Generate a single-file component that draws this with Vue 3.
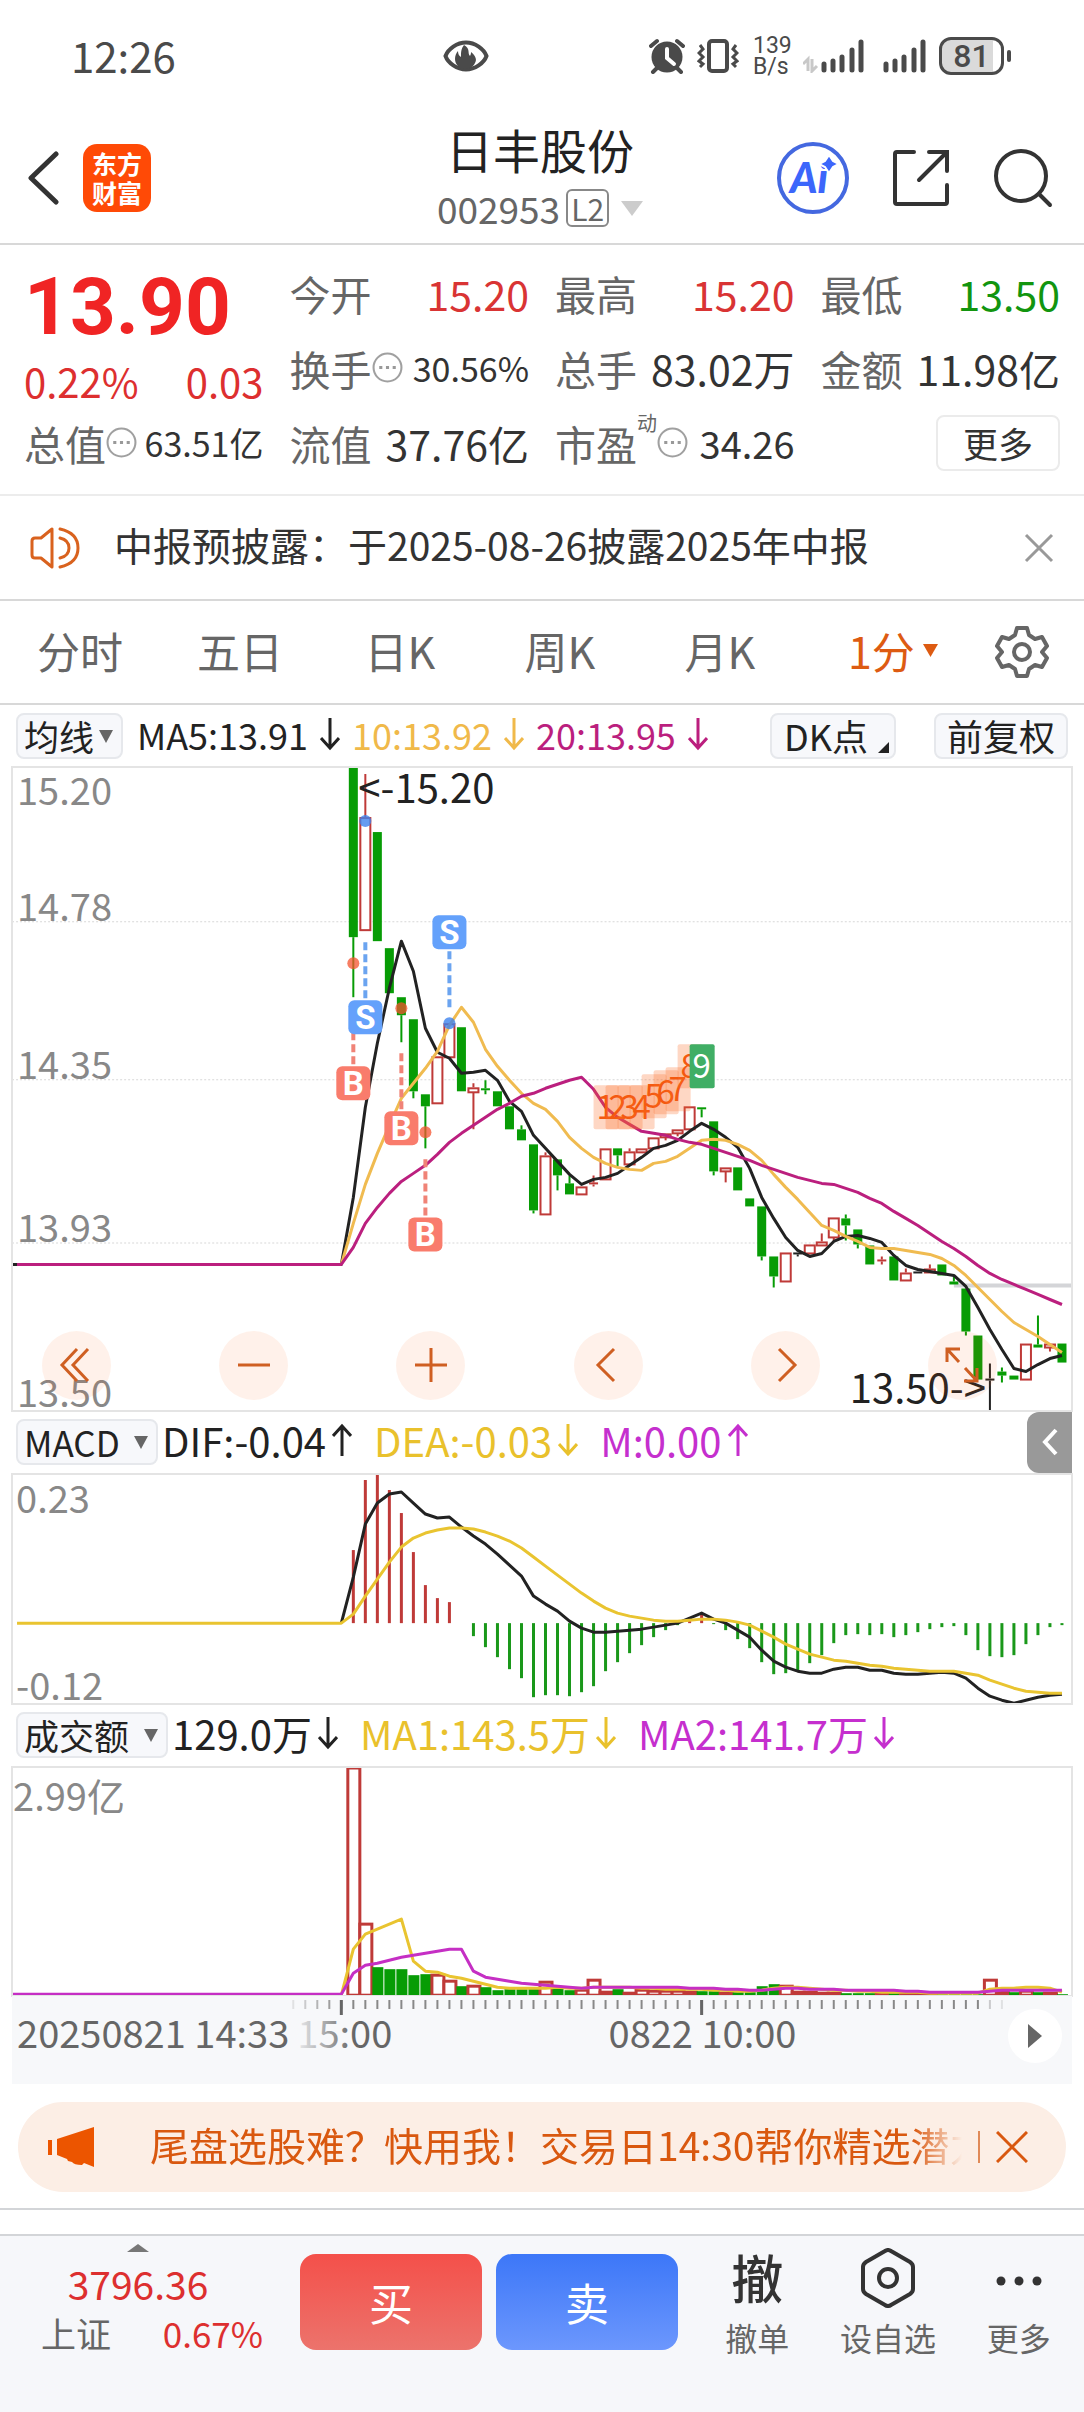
<template>
  <div class="page">
    <div class="status-bar">
      <span class="clock">12:26</span>
      <svg class="eye" viewBox="0 0 46 32">
        <path d="M2.500 16C5 9 14 2.500 23 2.500S41 9 43.500 16C41 23 32 29.500 23 29.500S5 23 2.500 16Z" fill="none" stroke="#4a4a4a" stroke-width="4" />
        <path d="M21 5c7 4 3 8 6 11 1-2 1-3 1-4 5 4 6 8 4 11-2 4-6 6-10 6-6 0-10-5-10-10 0-3 1-6 3-8 0 3 1 5 3 6 0-5 0-8 3-12Z" fill="#4a4a4a" />
      </svg>
      <div class="status-right">
        <svg class="alarm" viewBox="0 0 36 36">
          <circle cx="18" cy="19" r="15.500" fill="#4a4a4a" />
          <path d="M2 8l6-5M34 8l-6-5M8 30l-4 4M28 30l4 4" stroke="#4a4a4a" stroke-width="4" stroke-linecap="round" />
          <path d="M18 11v9l7 6" fill="none" stroke="#fff" stroke-width="4" stroke-linecap="round" />
        </svg>
        <svg class="vibrate" viewBox="0 0 42 34">
          <rect x="12" y="2" width="18" height="30" rx="3" fill="none" stroke="#4a4a4a" stroke-width="4" />
          <path d="M3 6l3 4-4 4 4 4-4 4 4 3-3 3M39 6l-3 4 4 4-4 4 4 4-4 3 3 3" fill="none" stroke="#4a4a4a" stroke-width="3" />
        </svg>
        <span class="speed"><span>139</span><span>B/s</span></span>
        <svg class="signal-data" viewBox="0 0 62 34">
          <path d="M0 25l5-5v12M14 27l-5 5V20" fill="none" stroke="#c8c8c8" stroke-width="3" />
          <path d="M21 25v6M30 22v9M39 18v13M49 11v20M58 3v28" stroke="#4a4a4a" stroke-width="5" stroke-linecap="round" />
        </svg>
        <svg class="signal" viewBox="0 0 44 34">
          <path d="M3 25v6M12 22v9M21 18v13M31 11v20M40 3v28" stroke="#4a4a4a" stroke-width="5" stroke-linecap="round" />
        </svg>
        <span class="battery">81</span>
      </div>
    </div>

    <header class="header">
      <div class="header-left">
        <button class="icon-btn" aria-label="返回">
          <svg width="32" height="54" viewBox="0 0 32 54"><path d="M29 3L4 27l25 24" fill="none" stroke="#333" stroke-width="5" stroke-linecap="round" stroke-linejoin="round" /></svg>
        </button>
        <span class="logo"><span>东方</span><span>财富</span></span>
      </div>
      <div class="header-title">
        <h1>日丰股份</h1>
        <button class="code">002953<span class="level">L2</span>
          <svg width="22" height="16" viewBox="0 0 22 16"><path d="M0 1h22L11 16Z" fill="#ccc" /></svg>
        </button>
      </div>
      <div class="header-right">
        <button class="icon-btn" aria-label="智能助手">
          <svg width="72" height="72" viewBox="0 0 72 72">
            <circle cx="36" cy="36" r="34" fill="none" stroke="#4468e0" stroke-width="4" />
            <text class="ai" x="13" y="51">Ai</text>
            <path d="M52 13l4 6 6 3-6 3-4 6-4-6-6-3 6-3Z" fill="#3c66fb" stroke="#fff" stroke-width="2" />
          </svg>
        </button>
        <button class="icon-btn" aria-label="分享">
          <svg width="58" height="58" viewBox="0 0 58 58">
            <path d="M22 3H5q-2 0-2 2v48q0 2 2 2h48q2 0 2-2V36M37 3h18v19M55 3L27 31" fill="none" stroke="#333" stroke-width="4" stroke-linecap="round" />
          </svg>
        </button>
        <button class="icon-btn" aria-label="搜索">
          <svg width="60" height="60" viewBox="0 0 60 60">
            <circle cx="28" cy="28" r="25" fill="none" stroke="#333" stroke-width="4" />
            <path d="M46 46l11 11" stroke="#333" stroke-width="4" stroke-linecap="round" />
          </svg>
        </button>
      </div>
    </header>

    <section class="quote">
      <div class="quote-main">
        <div class="price">13.90</div>
        <div class="change"><span>0.22%</span><span>0.03</span></div>
      </div>
      <div v-for="item in stats" :key="item.label" :class="['stat', item.color]">
        <span class="label">{{ item.label }}</span>
        <sup v-if="item.sup">{{ item.sup }}</sup>
        <svg v-if="item.tip" class="tip" viewBox="0 0 30 30">
          <circle cx="15" cy="15" r="13.500" fill="none" stroke="#a0a0a0" stroke-width="2" />
          <path d="M7 13.500h3v3H7zM13.500 13.500h3v3h-3zM20 13.500h3v3h-3z" fill="#999" />
        </svg>
        <span :class="['value', item.size]">{{ item.value }}</span>
      </div>
      <div class="more"><button>更多</button></div>
    </section>

    <section class="notice">
      <svg width="52" height="44" viewBox="0 0 52 44">
        <path d="M22 3v38L11 32H5q-3 0-3-3V15q0-3 3-3h6ZM30 3q18 4 18 19T30 41M30 12q9 2 9 10t-9 10" fill="none" stroke="#d9621e" stroke-width="3" stroke-linejoin="round" stroke-linecap="round" />
      </svg>
      <p>中报预披露：于2025-08-26披露2025年中报</p>
      <button class="icon-btn" aria-label="关闭公告">
        <svg width="30" height="30" viewBox="0 0 30 30"><path d="M2 2l26 26M28 2L2 28" stroke="#999" stroke-width="3" /></svg>
      </button>
    </section>

    <nav class="tabs">
      <button v-for="tab in tabs" :key="tab">{{ tab }}</button>
      <span class="tab-select">
        <select aria-label="分钟周期"><option>1分</option><option>5分</option></select>
        <svg width="15" height="13" viewBox="0 0 15 13"><path d="M0 0h15L7.500 13Z" fill="#dd5b12" /></svg>
      </span>
      <button class="gear" aria-label="设置">
        <svg width="54" height="54" viewBox="0 0 54 54">
          <path d="M22 3h10l2 7 6 4 7-2 5 9-5 6 5 6-5 9-7-2-6 4-2 7H22l-2-7-6-4-7 2-5-9 5-6-5-6 5-9 7 2 6-4Z" fill="none" stroke="#666" stroke-width="4" stroke-linejoin="round" />
          <circle cx="27" cy="27" r="8" fill="none" stroke="#666" stroke-width="4" />
        </svg>
      </button>
    </nav>

    <div class="indicator main-indicator">
      <span class="picker tight">
        <select aria-label="主图指标"><option>均线</option></select>
        <svg width="14" height="13" viewBox="0 0 14 13"><path d="M0 0h14L7 13Z" fill="#666" /></svg>
      </span>
      <span v-for="v in maValues" :key="v.text" :class="['reading', v.color]">
        {{ v.text }}<svg class="arrow" viewBox="0 0 20 34"><path :d="arrows[v.dir]" /></svg>
      </span>
      <button class="chip dk">DK点</button>
      <button class="chip">前复权</button>
    </div>

    <div class="chart price-chart">
      <svg viewBox="0 0 1059 643">
        <path class="grid-line" d="M0 154.500H1059M0 312.500H1059M0 475.500H1059" />
        <path class="prev-close" d="M941 518H1059" />
        <text v-for="t in priceLabels" :key="t.text" class="axis-text" x="5" :y="t.y">{{ t.text }}</text>
        <g v-for="(c, i) in candles" :key="i" :class="c[0]">
          <path class="wick" :d="`M${px(i)} ${c[3] ?? c[1]}V${c[1]}M${px(i)} ${c[2]}V${c[4] ?? c[2]}`" />
          <rect v-if="c[0] === 'up' && c[2] - c[1] > 3" class="hollow" :x="px(i) - 5" :y="c[1] + 1" width="10" :height="c[2] - c[1] - 1" />
          <rect v-else class="solid" :x="px(i) - 4.500" :y="c[1]" width="9" :height="c[2] - c[1]" />
        </g>
        <path class="line dark" d="M0 497H330" />
        <polyline class="line dark" :points="points(ma5)" />
        <polyline class="line amber" :points="points(ma10)" />
        <polyline class="line crimson" :points="'5,497 ' + points(ma20)" />
        <g v-for="(n, i) in countdown" :key="'n' + i">
          <rect :class="i === 8 ? 'count-last' : 'count-box'" :x="px(i + 21) - 12" :y="n - 22" width="25" height="44" rx="2" />
          <text :class="i === 8 ? 'count-last-text' : 'count-text'" :x="px(i + 21)" :y="n + 12">{{ i + 1 }}</text>
        </g>
        <g v-for="m in marks" :key="'m' + m.x" :class="m.side === 'S' ? 'sell-mark' : 'buy-mark'">
          <path :d="`M${m.x} ${m.from}V${m.to}`" />
          <circle :cx="m.x" :cy="m.dot" r="6" />
          <rect :x="m.x - 17" :y="m.y - 17" width="34" height="34" rx="6" />
          <text :x="m.x" :y="m.y + 12">{{ m.side }}</text>
        </g>
        <text class="peak-text" x="346" y="36">&lt;-15.20</text>
        <text class="peak-text" x="973" y="635" text-anchor="end">13.50-&gt;</text>
      </svg>
      <div class="chart-tools">
        <button v-for="tool in tools" :key="tool.name" :aria-label="tool.name">
          <svg width="36" height="36" viewBox="0 0 36 36"><path :d="tool.d" /></svg>
        </button>
      </div>
    </div>

    <div class="indicator">
      <span class="picker">
        <select aria-label="副图指标"><option>MACD</option></select>
        <svg width="14" height="13" viewBox="0 0 14 13"><path d="M0 0h14L7 13Z" fill="#666" /></svg>
      </span>
      <span v-for="v in macdValues" :key="v.text" :class="['reading', v.color]">
        {{ v.text }}<svg class="arrow" viewBox="0 0 20 34"><path :d="arrows[v.dir]" /></svg>
      </span>
      <button class="collapse" aria-label="展开侧栏">
        <svg width="16" height="28" viewBox="0 0 16 28"><path d="M14 2L3 14l11 12" fill="none" stroke="#fff" stroke-width="4" /></svg>
      </button>
    </div>

    <div class="chart">
      <svg viewBox="0 0 1059 230">
        <text class="axis-text" x="4" y="39">0.23</text>
        <text class="axis-text" x="4" y="226">-0.12</text>
        <path v-for="(h, i) in macdBars" :key="i" :class="h < 149 ? 'bar-up' : 'bar-down'" :d="`M${px(i)} 149V${h}`" />
        <polyline class="line dark" :points="points(dif)" />
        <polyline class="line gold" :points="'5,149 ' + points(dea)" />
      </svg>
    </div>

    <div class="indicator">
      <span class="picker">
        <select aria-label="量能指标"><option>成交额</option></select>
        <svg width="14" height="13" viewBox="0 0 14 13"><path d="M0 0h14L7 13Z" fill="#666" /></svg>
      </span>
      <span v-for="v in volumeValues" :key="v.text" :class="['reading', v.color]">
        {{ v.text }}<svg class="arrow" viewBox="0 0 20 34"><path :d="arrows[v.dir]" /></svg>
      </span>
    </div>

    <div class="chart">
      <svg viewBox="0 0 1059 229">
        <text class="axis-text" x="1" y="44">2.99亿</text>
        <g v-for="(v, i) in volumes" :key="i" :class="volumeUp.includes(i) ? 'up' : 'down'">
          <rect v-if="volumeUp.includes(i)" class="hollow thick" :x="px(i) - 5.500" :y="Math.min(v + 1, 226)" width="12" :height="Math.max(227 - v, 2)" />
          <rect v-else class="solid" :x="px(i) - 5" :y="v" width="11" :height="229 - v" />
        </g>
        <polyline class="line gold" :points="points(volMa1)" />
        <polyline class="line magenta" :points="'0,227 ' + points(volMa2)" />
      </svg>
    </div>

    <div class="time-axis">
      <svg viewBox="0 0 1059 88">
        <defs>
          <linearGradient id="fade"><stop offset="0" stop-color="#666" stop-opacity="0.1" /><stop offset="0.6" stop-color="#666" /></linearGradient>
        </defs>
        <path v-for="i in 60" :key="i" class="tick" :opacity="tickOpacity(i)" :d="`M${px(i - 6)} 4V13`" />
        <path class="tick major" :d="`M${px(-1)} 4V19M${px(29)} 4V19`" />
        <text class="time-text" x="5" y="52">20250821 14:33</text>
        <text class="time-text fading" x="285" y="52">15:00</text>
        <text class="time-text" x="596" y="52">0822 10:00</text>
      </svg>
      <button class="play" aria-label="播放">
        <svg width="14" height="24" viewBox="0 0 14 24"><path d="M0 0l14 12L0 24Z" fill="#666" /></svg>
      </button>
    </div>

    <div class="promo">
      <svg width="46" height="40" viewBox="0 0 46 40">
        <path d="M0 13h4v15H0zM9 12L46 0v40l-10-4-2 2q-8 0-10-3l-4-1-1-2-10-4Z" fill="#ec5500" />
      </svg>
      <a href="#">尾盘选股难？快用我！交易日14:30帮你精选潜力</a>
      <button class="icon-btn" aria-label="关闭推广">
        <svg width="32" height="32" viewBox="0 0 32 32"><path d="M1 1l30 30M31 1L1 31" stroke="#d9580f" stroke-width="3" /></svg>
      </button>
    </div>

    <hr class="divider">

    <footer class="bottom-bar">
      <div class="index">
        <svg width="22" height="8" viewBox="0 0 22 8"><path d="M0 8L11 0l11 8Z" fill="#777" /></svg>
        <strong>3796.36</strong>
        <div class="index-row"><span>上证</span><em>0.67%</em></div>
      </div>
      <button class="trade buy">买</button>
      <button class="trade sell">卖</button>
      <div class="actions">
        <button><span class="glyph">撤</span>撤单</button>
        <button>
          <svg class="glyph" width="56" height="60" viewBox="0 0 56 60">
            <path d="M25 3q3-2 6 0l19 11q3 2 3 5v22q0 3-3 5L31 57q-3 2-6 0L6 46q-3-2-3-5V19q0-3 3-5Z" fill="none" stroke="#333" stroke-width="4" />
            <circle cx="28" cy="30" r="9" fill="none" stroke="#333" stroke-width="4" />
          </svg>设自选
        </button>
        <button>
          <svg class="glyph" width="56" height="60" viewBox="0 0 56 60">
            <circle cx="10" cy="33" r="4.500" fill="#333" /><circle cx="28" cy="33" r="4.500" fill="#333" /><circle cx="46" cy="33" r="4.500" fill="#333" />
          </svg>更多
        </button>
      </div>
    </footer>
  </div>
</template>

<script setup>
const stats = [
  { label: '今开', value: '15.20', color: 'red' },
  { label: '最高', value: '15.20', color: 'red' },
  { label: '最低', value: '13.50', color: 'green' },
  { label: '换手', value: '30.56%', tip: true, size: 'small' },
  { label: '总手', value: '83.02万' },
  { label: '金额', value: '11.98亿' },
  { label: '总值', value: '63.51亿', tip: true, size: 'small' },
  { label: '流值', value: '37.76亿' },
  { label: '市盈', value: '34.26', sup: '动', tip: true, size: 'medium' },
]

const tabs = ['分时', '五日', '日K', '周K', '月K']

const maValues = [
  { text: 'MA5:13.91', color: 'c-dark', dir: 'down' },
  { text: '10:13.92', color: 'c-amber', dir: 'down' },
  { text: '20:13.95', color: 'c-crimson', dir: 'down' },
]
const macdValues = [
  { text: 'DIF:-0.04', color: 'c-dark', dir: 'up' },
  { text: 'DEA:-0.03', color: 'c-gold', dir: 'down' },
  { text: 'M:0.00', color: 'c-magenta', dir: 'up' },
]
const volumeValues = [
  { text: '129.0万', color: 'c-dark', dir: 'down' },
  { text: 'MA1:143.5万', color: 'c-gold', dir: 'down' },
  { text: 'MA2:141.7万', color: 'c-magenta', dir: 'down' },
]

const arrows = {
  up: 'M10 33V3M1 13l9-10 9 10',
  down: 'M10 1v30M1 21l9 10 9-10',
}

const tools = [
  { name: '最早', d: 'M18 2L3 18l15 16M29 2L14 18l15 16' },
  { name: '缩小', d: 'M2 18h32' },
  { name: '放大', d: 'M2 18h32M18 1v34' },
  { name: '左移', d: 'M24 2L8 18l16 16' },
  { name: '右移', d: 'M12 2l16 16-16 16' },
  { name: '全屏', d: 'M3 15V2h13M3 2l12 13M33 21v13H20M33 34L21 21' },
]

const priceLabels = [
  { text: '15.20', y: 38 },
  { text: '14.78', y: 154 },
  { text: '14.35', y: 312 },
  { text: '13.93', y: 475 },
  { text: '13.50', y: 639 },
]

// candles are 12 units apart
const px = (i) => 341 + i * 12

// the averages start one step before the first candle
const points = (values) => values.map((y, i) => `${px(i - 1)},${y}`).join(' ')

const tickOpacity = (i) => {
  if (i <= 4) return i * 0.2
  return i >= 59 ? 0.4 - (i - 59) * 0.2 : 1
}

// [direction, body top, body bottom, wick top, wick bottom]
const candles = [
  ['down', 0, 170, 0, 230], ['up', 50, 163, 7], ['down', 65, 174], ['down', 181, 226],
  ['down', 230, 248, 230, 275], ['down', 252, 324, 252, 331], ['down', 327, 339, 327, 381],
  ['up', 289, 336], ['up', 256, 290], ['down', 260, 324], ['up', 320, 325, 316, 362],
  ['down', 321, 323, 313, 327], ['down', 324, 339], ['down', 339, 362], ['down', 362, 373, 358],
  ['down', 377, 443, 377, 446], ['up', 388, 447, 385], ['down', 392, 408, 392, 423],
  ['down', 416, 427, 408], ['up', 419, 427], ['up', 415, 417, 408, 419], ['up', 381, 412],
  ['down', 381, 388, 381, 399], ['up', 384, 397, 381], ['up', 381, 385], ['up', 370, 381],
  ['up', 366, 370, 366, 373], ['up', 362, 366, 362, 369], ['up', 339, 362],
  ['down', 340, 342, 340, 350], ['down', 354, 404, 354, 408], ['up', 400, 404, 400, 415],
  ['down', 400, 423], ['down', 431, 439], ['down', 439, 489, 439, 493], ['down', 489, 509, 489, 520],
  ['up', 485, 514], ['flat', 485, 487, 485, 489], ['up', 477, 486], ['up', 474, 478, 466],
  ['up', 450, 470, 450, 474], ['down', 451, 458, 447, 473], ['down', 462, 477, 462, 481],
  ['down', 478, 497], ['up', 492, 494, 489, 497], ['down', 489, 513], ['up', 505, 513, 501],
  ['flat', 504, 506], ['up', 501, 505, 497], ['down', 497, 508], ['down', 514, 517, 508],
  ['down', 521, 564, 521, 568], ['down', 568, 612], ['flat', 611, 613, 596, 643],
  ['down', 604, 608, 600, 615], ['down', 608, 612], ['up', 576, 612], ['down', 577, 580, 548],
  ['up', 576, 580, 576, 584], ['down', 576, 595],
]

const ma5 = [
  497, 430, 340, 276, 221, 174, 204, 261, 285, 291, 306, 305, 303, 313, 334, 344, 368, 381, 394, 407,
  417, 412, 410, 406, 398, 390, 381, 378, 373, 364, 356, 362, 370, 380, 401, 430, 451, 470, 483, 489,
  486, 474, 469, 468, 471, 475, 488, 498, 502, 504, 506, 508, 519, 540, 562, 582, 601, 604, 597, 591, 588,
]
const ma10 = [
  497, 456, 417, 386, 358, 331, 316, 301, 284, 258, 240, 255, 282, 299, 313, 326, 336, 342, 354, 370,
  381, 390, 396, 400, 402, 403, 396, 394, 389, 381, 373, 372, 373, 377, 383, 393, 407, 420, 432, 445,
  458, 463, 469, 474, 480, 481, 481, 483, 485, 487, 491, 498, 508, 520, 532, 544, 555, 562, 569, 577, 585,
]
const ma20 = [
  497, 480, 456, 440, 426, 414, 406, 398, 387, 375, 366, 358, 350, 342, 336, 329, 326, 321, 317, 313,
  310, 322, 340, 350, 357, 364, 366, 368, 372, 375, 377, 381, 385, 389, 393, 398, 402, 406, 410, 413,
  416, 417, 421, 425, 431, 436, 444, 451, 458, 466, 474, 481, 489, 498, 506, 512, 517, 522, 527, 532, 537,
]

const countdown = [340, 340, 340, 340, 329, 325, 322, 299, 299]

const marks = [
  { side: 'B', x: 341, y: 316, from: 241, to: 299, dot: 196 },
  { side: 'S', x: 353, y: 250, from: 175, to: 233, dot: 54 },
  { side: 'B', x: 389, y: 361, from: 286, to: 344, dot: 241 },
  { side: 'B', x: 413, y: 467, from: 392, to: 450, dot: 365 },
  { side: 'S', x: 437, y: 165, from: 184, to: 242, dot: 256 },
]

const macdBars = [
  76, 6, 0, 16, 39, 78, 111, 124, 128, 149, 162, 173, 183, 195, 204, 223, 221, 221, 222, 218,
  212, 197, 188, 179, 171, 163, 156, 151, 143, 139, 150, 156, 165, 174, 188, 200, 199, 196, 189, 181,
  169, 161, 160, 161, 160, 163, 161, 158, 155, 153, 152, 161, 176, 182, 183, 181, 170, 161, 153, 151,
]
const dif = [
  149, 103, 50, 29, 20, 18, 29, 40, 44, 43, 53, 62, 70, 80, 91, 102, 122, 130, 137, 147,
  154, 158, 158, 157, 156, 155, 153, 151, 149, 144, 139, 145, 149, 156, 163, 176, 187, 193, 197, 199,
  199, 195, 193, 193, 196, 196, 199, 200, 200, 199, 198, 199, 204, 214, 222, 226, 229, 226, 223, 221, 220,
]
const dea = [
  149, 140, 122, 105, 88, 73, 64, 59, 56, 54, 54, 55, 58, 62, 67, 74, 83, 92, 101, 110,
  119, 127, 134, 139, 142, 144, 146, 147, 147, 146, 145, 145, 146, 148, 151, 157, 163, 170, 175, 180,
  183, 186, 187, 189, 191, 192, 194, 195, 196, 197, 197, 197, 199, 201, 206, 210, 214, 217, 218, 219, 219,
]

const volumes = [
  0, 156, 200, 202, 202, 208, 207, 207, 213, 219, 218, 220, 223, 222, 222, 221, 214, 221, 223, 222,
  212, 224, 222, 225, 222, 223, 223, 223, 224, 224, 224, 225, 225, 225, 219, 217, 218, 224, 224, 225,
  225, 226, 226, 226, 226, 226, 226, 227, 227, 227, 227, 227, 227, 212, 224, 225, 223, 225, 226, 227,
]
const volumeUp = [0, 1, 7, 8, 10, 16, 19, 20, 21, 23, 24, 25, 26, 27, 28, 31, 36, 37, 38, 39, 40, 44, 46, 47, 48, 53, 54, 56, 58]
const volMa1 = [
  228, 182, 167, 162, 157, 152, 194, 204, 205, 209, 211, 214, 217, 220, 221, 221, 221, 221, 220, 221,
  221, 220, 220, 220, 220, 221, 221, 222, 222, 222, 222, 223, 223, 224, 224, 223, 221, 220, 220, 221,
  222, 223, 223, 224, 224, 225, 225, 225, 225, 226, 226, 226, 226, 226, 222, 221, 221, 220, 220, 221, 225,
]
const volMa2 = [
  227, 206, 198, 196, 193, 190, 188, 186, 184, 182, 182, 204, 210, 212, 214, 216, 217, 218, 219, 220,
  221, 220, 220, 220, 220, 220, 220, 220, 220, 221, 221, 221, 222, 222, 223, 223, 222, 221, 221, 222,
  222, 222, 223, 223, 223, 223, 223, 224, 224, 225, 225, 225, 225, 225, 224, 223, 223, 223, 223, 223, 223,
]
</script>

<style>
body {
  margin: 0;
  background: #fff;
}
</style>

<style scoped>
.page {
  display: flex;
  flex-direction: column;
  min-height: 100vh;
  font-family: "Noto Sans CJK SC", sans-serif;
  color: #333;
}

button,
select {
  margin: 0;
  padding: 0;
  border: 0;
  background: none;
  color: inherit;
  font: inherit;
  appearance: none;
}

svg {
  display: block;
  flex-shrink: 0;
}

/* Status bar */
.status-bar {
  display: grid;
  grid-template-columns: 372px auto 1fr;
  align-items: center;
  height: 112px;
  padding: 0 80px 0 71px;
  color: #4a4a4a;
}

.clock {
  padding-bottom: 4px;
  font-size: 42px;
}

.eye {
  width: 46px;
  height: 32px;
}

.status-right {
  display: flex;
  justify-content: flex-end;
  align-items: center;
}

.alarm {
  width: 36px;
  height: 36px;
}

.vibrate {
  width: 42px;
  height: 34px;
  margin: 0 14px 0 12px;
}

.speed {
  display: flex;
  flex-direction: column;
  width: 50px;
  font-family: Roboto, sans-serif;
  font-size: 23px;
  line-height: 21px;
}

.signal-data {
  width: 62px;
  height: 34px;
}

.signal {
  width: 44px;
  height: 34px;
  margin: 0 12px 0 18px;
}

.battery {
  position: relative;
  width: 59px;
  height: 32px;
  border: 3px solid #4a4a4a;
  border-radius: 12px;
  background: linear-gradient(90deg, #dadada 86%, #fff 86%);
  font-family: Roboto, sans-serif;
  font-size: 32px;
  font-weight: 500;
  line-height: 33px;
  text-align: center;
}

.battery::after {
  content: "";
  position: absolute;
  top: 10px;
  right: -10px;
  width: 4px;
  height: 12px;
  border-radius: 2px;
  background: #4a4a4a;
}

/* Header */
.header {
  display: grid;
  grid-template-columns: 1fr auto 1fr;
  align-items: center;
  height: 131px;
  padding: 0 31px 0 27px;
  border-bottom: 2px solid #d8d8d8;
}

.header-left {
  display: flex;
  align-items: center;
  gap: 24px;
}

.logo {
  display: flex;
  flex-direction: column;
  align-items: center;
  justify-content: center;
  width: 68px;
  height: 68px;
  border-radius: 14px;
  background: #ff4a06;
  color: #fff;
  font-size: 25px;
  font-weight: 700;
  line-height: 29px;
}

.header-title {
  display: flex;
  flex-direction: column;
  align-items: center;
  padding-bottom: 4px;
}

h1 {
  margin: 0;
  font-size: 47px;
  font-weight: 400;
  line-height: 64px;
  color: #222;
}

.code {
  display: flex;
  align-items: center;
  font-size: 37px;
  line-height: 54px;
  color: #666;
}

.code svg {
  margin-left: 12px;
}

.level {
  margin-left: 6px;
  padding: 0 3px;
  border: 2px solid #888;
  border-radius: 6px;
  font-size: 30px;
  line-height: 34px;
}

.header-right {
  display: flex;
  justify-content: flex-end;
  align-items: center;
  gap: 43px;
}

.ai {
  font-family: Lato, sans-serif;
  font-size: 42px;
  font-weight: 900;
  font-style: italic;
  fill: #3c66fb;
}

/* Quote */
.quote {
  display: grid;
  grid-template-columns: repeat(4, 1fr);
  grid-auto-rows: 75px;
  column-gap: 26px;
  padding: 10px 24px 14px;
  border-bottom: 2px solid #ececec;
}

.quote-main {
  grid-row: span 2;
  color: #dd2f2f;
}

.price {
  font-family: Roboto, sans-serif;
  font-size: 80px;
  font-weight: 700;
  line-height: 104px;
  color: #f02424;
}

.change {
  display: flex;
  justify-content: space-between;
  font-size: 40px;
  line-height: 44px;
}

.stat {
  display: flex;
  align-items: center;
  white-space: nowrap;
  font-size: 41px;
}

.label {
  color: #666;
}

.stat sup {
  align-self: flex-start;
  font-size: 20px;
  line-height: 36px;
  color: #666;
}

.tip {
  width: 31px;
  height: 31px;
}

.value {
  margin-left: auto;
}

.value.small {
  font-size: 34px;
}

.value.medium {
  font-size: 38px;
}

.red .value {
  color: #d93434;
}

.green .value {
  color: #12950f;
}

.more {
  display: flex;
  align-items: center;
  justify-content: flex-end;
}

.more button {
  width: 124px;
  height: 56px;
  border: 2px solid #ebebeb;
  border-radius: 8px;
  font-size: 35px;
  line-height: 50px;
}

/* Notice */
.notice {
  display: flex;
  align-items: center;
  height: 103px;
  padding: 0 30px;
  border-bottom: 2px solid #d8d8d8;
}

.notice p {
  flex: 1;
  margin: 0 0 0 32px;
  padding-bottom: 8px;
  font-size: 39px;
  white-space: nowrap;
}

/* Period tabs */
.tabs {
  display: flex;
  align-items: center;
  height: 102px;
  border-bottom: 2px solid #d8d8d8;
  font-size: 43px;
  color: #666;
}

.tabs button,
.tab-select {
  flex: 1;
  padding-bottom: 4px;
}

.tab-select {
  display: flex;
  align-items: center;
  justify-content: flex-end;
  gap: 8px;
  color: #dd5b12;
}

.tab-select svg {
  margin-right: 22px;
}

.tabs .gear {
  display: flex;
  flex: 0 0 124px;
  justify-content: flex-end;
  box-sizing: border-box;
  padding: 0 35px 0 0;
}

/* Indicator rows */
.indicator {
  display: flex;
  align-items: center;
  height: 63px;
  padding: 0 12px 0 16px;
  font-size: 40px;
}

.main-indicator {
  height: 62px;
  font-size: 36px;
}

.picker,
.chip {
  display: flex;
  align-items: center;
  box-sizing: border-box;
  height: 46px;
  border: 2px solid #e6e8ec;
  border-radius: 8px;
  background: #f7f8fb;
  color: #222;
  font-size: 35px;
}

.picker {
  gap: 14px;
  margin-right: 4px;
  padding: 0 8px 0 6px;
}

.picker.tight {
  gap: 4px;
  margin-right: 14px;
}

.picker select {
  height: 42px;
  line-height: 42px;
}

.reading {
  display: flex;
  align-items: center;
  margin-right: 22px;
  padding-bottom: 4px;
  line-height: 56px;
  white-space: nowrap;
}

.main-indicator .reading {
  margin-right: 12px;
}

.arrow {
  width: 20px;
  height: 34px;
  margin-left: 6px;
  fill: none;
  stroke: currentColor;
  stroke-width: 3;
}

.main-indicator .arrow {
  margin-left: 12px;
}

.chip {
  padding: 0 11px 3px;
  font-size: 36px;
}

.dk {
  position: relative;
  margin: 0 38px 0 auto;
  padding: 0 26px 3px 12px;
}

.dk::after {
  content: "";
  position: absolute;
  right: 5px;
  bottom: 4px;
  border-left: 11px solid transparent;
  border-bottom: 11px solid #222;
}

.main-indicator .chip:last-child {
  margin-right: 4px;
}

.collapse {
  display: flex;
  align-items: center;
  justify-content: center;
  width: 45px;
  height: 61px;
  margin-left: auto;
  border-radius: 12px 0 0 12px;
  background: #999;
}

.c-dark { color: #222; }
.c-amber { color: #f0b94a; }
.c-crimson { color: #bb1f7e; }
.c-gold { color: #e9c12c; }
.c-magenta { color: #c52fce; }

/* Charts */
.chart {
  position: relative;
  margin: 0 12px;
  outline: 2px solid #e4e4e4;
  outline-offset: -1px;
}

.chart svg,
.time-axis > svg {
  width: 100%;
  height: auto;
  overflow: visible;
}

.grid-line {
  stroke: #d8d8d8;
  stroke-dasharray: 2 2;
}

.prev-close {
  stroke: #d4d5d8;
  stroke-width: 4;
}

.axis-text {
  font-size: 38px;
  fill: #888;
}

.peak-text {
  font-size: 40px;
  fill: #222;
}

.line {
  fill: none;
  stroke-width: 3;
  stroke-linejoin: round;
}

.dark { stroke: #222; }
.amber { stroke: #f0bb50; }
.crimson { stroke: #bb1f7e; }
.gold { stroke: #e9c430; }
.magenta { stroke: #c52fc4; }

.wick {
  stroke-width: 2;
}

.up .wick { stroke: #bf3a38; }
.down .wick { stroke: #079c05; }
.flat .wick { stroke: #222; }
.up .solid { fill: #bf3a38; }
.down .solid { fill: #079c05; }
.flat .solid { fill: #222; }

.hollow {
  fill: #fff;
  stroke: #bf3a38;
  stroke-width: 2;
}

.hollow.thick {
  stroke-width: 3;
}

.bar-up {
  stroke: #bf3a38;
  stroke-width: 3;
}

.bar-down {
  stroke: #1a981a;
  stroke-width: 3;
}

.count-box {
  fill: #fb6c26;
  fill-opacity: 0.27;
}

.count-last {
  fill: #40ae65;
}

.count-text,
.count-last-text {
  font-size: 33px;
  text-anchor: middle;
  fill: #f4590f;
}

.count-last-text {
  fill: #fff;
}

.buy-mark path,
.sell-mark path {
  stroke-width: 4;
  stroke-dasharray: 8 4;
}

.buy-mark path { stroke: #f08377; }
.sell-mark path { stroke: #6ba4f0; }

.buy-mark rect { fill: #f97c6c; }
.sell-mark rect { fill: #64a1fb; }

.buy-mark circle {
  fill: #f4532f;
  fill-opacity: 0.75;
}

.sell-mark circle {
  fill: #3f83ee;
  fill-opacity: 0.8;
}

.buy-mark text,
.sell-mark text {
  font-family: Roboto, sans-serif;
  font-size: 33px;
  font-weight: 700;
  text-anchor: middle;
  fill: #fff;
}

.chart-tools {
  position: absolute;
  left: 30px;
  right: 75px;
  bottom: 11px;
  display: flex;
  justify-content: space-between;
}

.chart-tools button {
  display: flex;
  align-items: center;
  justify-content: center;
  width: 69px;
  height: 69px;
  border-radius: 50%;
  background: rgba(255, 105, 25, 0.09);
}

.chart-tools svg {
  width: 36px;
  height: 36px;
  fill: none;
  stroke: #cf5f22;
  stroke-width: 3;
}

/* Time axis */
.time-axis {
  position: relative;
  margin: 0 12px;
  background: #f7f8fa;
}

.tick {
  stroke: #888;
  stroke-width: 2;
}

.tick.major {
  stroke: #666;
  stroke-width: 3;
}

.time-text {
  font-size: 38px;
  fill: #666;
}

.time-text.fading {
  fill: url(#fade);
}

.play {
  position: absolute;
  top: 13px;
  right: 10px;
  display: flex;
  align-items: center;
  justify-content: center;
  width: 54px;
  height: 54px;
  border-radius: 50%;
  background: #fff;
}

/* Promo strip */
.promo {
  display: flex;
  align-items: center;
  height: 90px;
  margin: 18px 18px 16px;
  padding: 0 38px 0 30px;
  border-radius: 45px;
  background: #fceee5;
}

.promo a {
  flex: 1;
  overflow: hidden;
  margin: 0 16px 0 56px;
  padding-bottom: 6px;
  color: #d9580f;
  font-size: 39px;
  text-decoration: none;
  white-space: nowrap;
  mask-image: linear-gradient(90deg, #000 94%, transparent);
}

.promo .icon-btn {
  padding-left: 16px;
  border-left: 2px solid #e08a58;
}

.divider {
  width: 100%;
  margin: 0;
  border: 0;
  border-top: 2px solid #d3d5d8;
}

/* Bottom bar */
.bottom-bar {
  display: flex;
  flex: 1;
  align-items: flex-start;
  margin-top: 24px;
  border-top: 2px solid #d3d5d8;
  background: #f6f7fa;
}

.index {
  display: flex;
  flex-direction: column;
  align-items: center;
  width: 300px;
  padding: 8px 24px 0 0;
  box-sizing: border-box;
}

.index strong {
  font-size: 39px;
  font-weight: 400;
  line-height: 62px;
  color: #dd2f2f;
}

.index-row {
  display: flex;
  justify-content: space-between;
  width: 222px;
  margin-left: 28px;
  font-size: 35px;
  line-height: 38px;
  color: #666;
}

.index-row em {
  font-style: normal;
  color: #dd2f2f;
}

.trade {
  width: 182px;
  height: 96px;
  margin: 18px 14px 0 0;
  border-radius: 16px;
  color: #fff;
  font-size: 44px;
  line-height: 92px;
}

.buy {
  background: linear-gradient(#f4504a, #ec736c);
}

.sell {
  background: linear-gradient(#3c77f8, #6c97fd);
}

.actions {
  display: flex;
  flex: 1;
}

.actions button {
  display: flex;
  flex: 1;
  flex-direction: column;
  align-items: center;
  padding-top: 12px;
  font-size: 32px;
  line-height: 58px;
  color: #666;
}

.actions .glyph {
  height: 60px;
  font-size: 52px;
  font-weight: 500;
  color: #333;
}
</style>
